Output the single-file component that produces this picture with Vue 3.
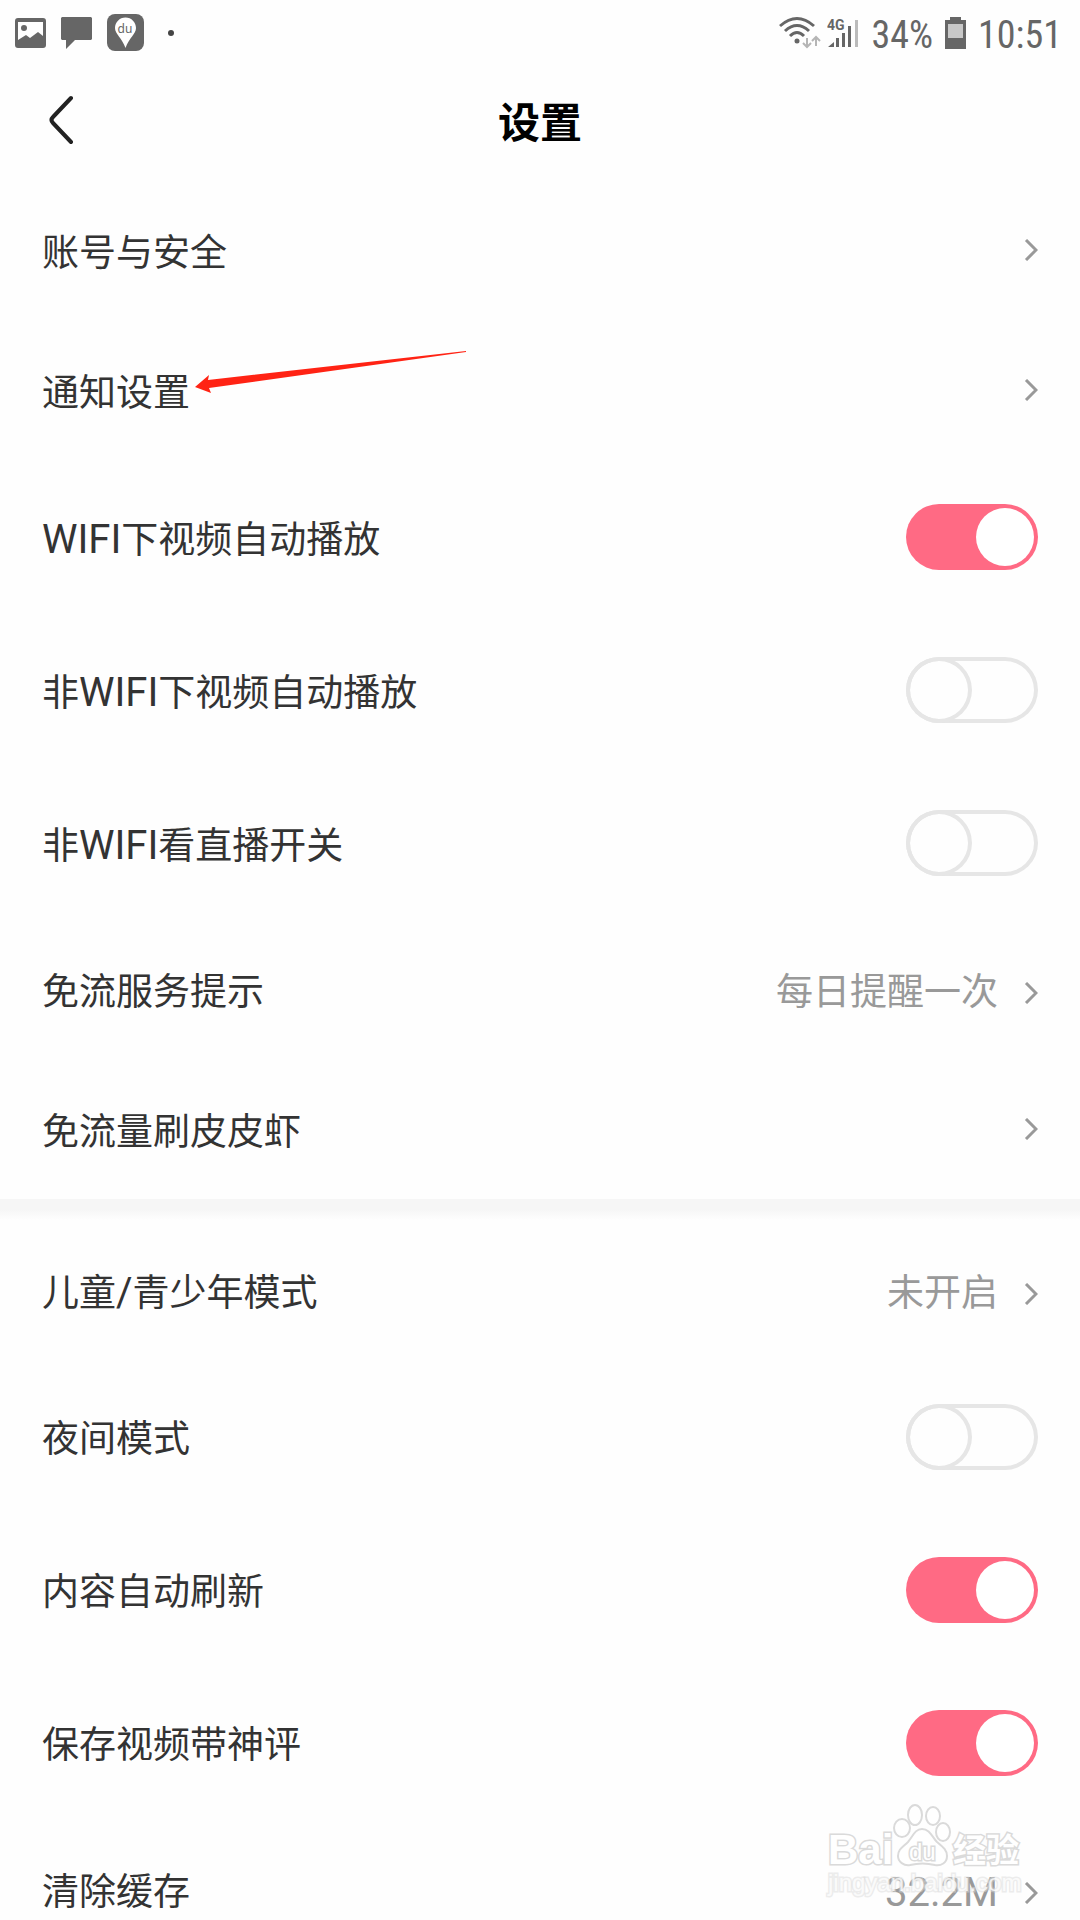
<script setup>
import { reactive } from 'vue'

const groups = reactive([
  [
    { id: 'account', label: '账号与安全' },
    { id: 'notify', label: '通知设置', marked: true },
    { id: 'wifiPlay', label: 'WIFI下视频自动播放', type: 'switch', on: true },
    { id: 'cellPlay', label: '非WIFI下视频自动播放', type: 'switch', on: false },
    { id: 'cellLive', label: '非WIFI看直播开关', type: 'switch', on: false },
    { id: 'freeTip', label: '免流服务提示', value: '每日提醒一次' },
    { id: 'freeFlow', label: '免流量刷皮皮虾' }
  ],
  [
    { id: 'teen', label: '儿童/青少年模式', value: '未开启' },
    { id: 'night', label: '夜间模式', type: 'switch', on: false },
    { id: 'refresh', label: '内容自动刷新', type: 'switch', on: true },
    { id: 'saveVideo', label: '保存视频带神评', type: 'switch', on: true },
    { id: 'cache', label: '清除缓存', value: '32.2M' }
  ]
])

// 拆開中英文,英文字級稍大
const split = (text) => text.match(/[\x20-\x7e]+|[^\x20-\x7e]+/g)
const isLatin = (part) => /^[\x20-\x7e]/.test(part)
</script>

<template>
  <div class="page">
    <div class="status">
      <div class="status-left">
        <svg width="31" height="30" viewBox="0 0 31 30">
          <path fill="#666" fill-rule="evenodd" d="M3 0h25a3 3 0 0 1 3 3v24a3 3 0 0 1-3 3H3a3 3 0 0 1-3-3V3a3 3 0 0 1 3-3zM3 4v18l8-5 4 3 8-6 5 4V4z" />
          <circle cx="9" cy="10" r="3" fill="#666" />
        </svg>
        <svg width="31" height="32" viewBox="0 0 31 32">
          <path fill="#666" d="M1 0h29l1 1v21l-1 1H14l-9 9v-9H1l-1-1V1z" />
        </svg>
        <svg width="37" height="37" viewBox="0 0 37 37">
          <rect width="37" height="37" rx="8" fill="#666" />
          <path fill="#fff" d="M18.500 3.500c-6 0-10.500 5-10.500 10.500 0 6 7 10 10.500 20 3.500-10 10.500-14 10.500-20 0-5.500-4.500-10.500-10.500-10.500z" />
          <text x="18" y="19" text-anchor="middle" class="du-icon">du</text>
        </svg>
        <i class="dot"></i>
      </div>
      <div class="status-right">
        <svg width="42" height="34" viewBox="0 0 42 34">
          <g fill="none" stroke="#666" stroke-width="3">
            <path d="M1 10Q18-5 35 10" />
            <path d="M6 15Q18 4 30 15" />
            <path d="M11 20Q18 13 25 20" />
          </g>
          <circle cx="18" cy="25" r="2.500" fill="#666" />
          <path fill="none" stroke="#b5b5b5" stroke-width="2" d="M28 22v9M24 27l4 4 4-4M37 30v-9M33 25l4-4 4 4" />
        </svg>
        <svg class="signal" width="33" height="30" viewBox="0 0 33 30">
          <text x="0" y="12" class="net">4G</text>
          <path fill="#666" d="M1 29l6-5v5zM9 20h3v9H9zM15 15h3v14h-3zM21 8h3v21h-3z" />
          <path fill="#bbb" d="M28 2h3v27h-3z" />
        </svg>
        <span class="status-text">34%</span>
        <svg class="battery" width="21" height="32" viewBox="0 0 21 32">
          <path fill="#666" d="M5 0h11v3h5v29H0V3h5z" />
          <path fill="#c8c8c8" d="M3 7h15v14H3z" />
        </svg>
        <span class="status-text">10:51</span>
      </div>
    </div>

    <header class="header">
      <button class="back" type="button" aria-label="返回">
        <svg width="26" height="50" viewBox="0 0 26 50">
          <path d="M23 3L5 22q-3 3 0 6l18 19" />
        </svg>
      </button>
      <h1>设置</h1>
    </header>

    <main>
      <section v-for="(group, index) in groups" :key="index" class="group">
        <template v-for="item in group" :key="item.id">
          <div v-if="item.type == 'switch'" class="row row-switch">
            <label :for="item.id" class="label">
              <span v-for="part in split(item.label)" :class="{ latin: isLatin(part) }">{{ part }}</span>
            </label>
            <input :id="item.id" v-model="item.on" type="checkbox" class="switch" >
          </div>
          <button v-else type="button" class="row">
            <span class="label">
              <span v-for="part in split(item.label)" :class="{ latin: isLatin(part) }">{{ part }}</span>
            </span>
            <span v-if="item.value" class="value" :class="{ latin: isLatin(item.value) }">{{ item.value }}</span>
            <svg class="chevron" width="14" height="22" viewBox="0 0 14 22">
              <path d="M2 1l10 10L2 21" />
            </svg>
            <svg v-if="item.marked" class="pointer" width="272" height="44" viewBox="0 0 272 44">
              <path fill="#ff2314" d="M0 37l14-12-1 5L271 1v1L14 38l2 5z" />
            </svg>
          </button>
        </template>
      </section>
    </main>

    <svg class="watermark" width="200" height="100" viewBox="0 0 200 100">
      <text x="4" y="64" class="wm-bai">Bai</text>
      <ellipse cx="78" cy="28" rx="8" ry="9" />
      <ellipse cx="91" cy="15" rx="7" ry="10" />
      <ellipse cx="109" cy="16" rx="7" ry="9" />
      <ellipse cx="119" cy="32" rx="7" ry="9" />
      <path d="M98 29c8 0 10 8 15 13 6 5 10 8 10 14 0 7-6 10-12 9-8-2-17-2-25 0-6 1-12-3-12-9 0-7 5-9 10-14 5-6 7-13 14-13z" />
      <text x="85" y="60" class="wm-du">du</text>
      <text x="129" y="62" class="wm-cn">经验</text>
      <text x="4" y="91" class="wm-url">jingyan.baidu.com</text>
    </svg>
  </div>
</template>

<style>
body {
  background: #fefefe;
}
</style>

<style scoped>
.page {
  position: relative;
  height: 100vh;
  overflow: hidden;
  display: flex;
  flex-direction: column;
  background: #fefefe;
  color: #333;
  font-family: Roboto, "Noto Sans CJK SC", sans-serif;
}
main {
  flex: 1;
  min-height: 0;
  overflow-y: auto;
  scrollbar-width: none;
}
.status {
  display: flex;
  flex: none;
  justify-content: space-between;
  box-sizing: border-box;
  height: 60px;
  padding: 5px 18px 0 15px;
  color: #666;
  font-family: "Roboto Condensed", "Liberation Sans Narrow", Roboto, sans-serif;
  font-size: 38px;
}
.status-left {
  display: flex;
  align-items: center;
  gap: 15px;
}
.status-right {
  display: flex;
  align-items: center;
}
.status-text {
  padding-top: 4px;
}
.dot {
  width: 6px;
  height: 6px;
  margin-left: 9px;
  border-radius: 50%;
  background: #444;
}
.du-icon {
  fill: #666;
  font: 12px "Noto Sans", sans-serif;
}
.net {
  fill: #666;
  font: bold 14px Roboto, sans-serif;
}
.signal {
  margin: 0 12px 0 6px;
}
.battery {
  margin: 0 12px;
}
.header {
  display: grid;
  flex: none;
  grid-template-columns: 1fr auto 1fr;
  align-items: center;
  height: 120px;
  padding: 0 48px;
}
.header h1 {
  margin: 0;
  padding-top: 7px;
  color: #000;
  font-size: 42px;
  line-height: 60px;
}
.back {
  justify-self: start;
  display: flex;
  padding: 0;
  border: 0;
  background: none;
}
.back path {
  fill: none;
  stroke: #222;
  stroke-width: 4;
  stroke-linecap: round;
}
.group + .group::before {
  content: "";
  display: block;
  height: 21px;
  background: linear-gradient(#f6f6f6 50%, #fefefe);
}
.row {
  position: relative;
  display: flex;
  align-items: center;
  box-sizing: border-box;
  width: 100%;
  height: 140px;
  padding: 0 42px;
  border: 0;
  background: none;
  color: #333;
  font-family: inherit;
  font-size: 37px;
  line-height: 54px;
  text-align: left;
}
.row-switch {
  height: 153px;
}
.label {
  flex: 1;
}
.label,
.value {
  padding-top: 7px;
}
.latin {
  font-size: 40px;
}
.value {
  color: #999;
}
.chevron {
  margin-left: 26px;
}
.value + .chevron {
  margin-top: 7px;
}
.chevron path {
  fill: none;
  stroke: #999;
  stroke-width: 3;
}
.pointer {
  position: absolute;
  left: 195px;
  top: 30px;
}
.switch {
  appearance: none;
  display: flex;
  box-sizing: border-box;
  width: 132px;
  height: 66px;
  margin: 0;
  border-radius: 33px;
  box-shadow: inset 0 0 0 4px #e6e6e6;
}
.switch::before {
  content: "";
  width: 66px;
  height: 66px;
  border-radius: 50%;
  box-shadow: inset 0 0 0 4px #e6e6e6;
}
.switch:checked {
  justify-content: flex-end;
  background: #ff6a84;
  box-shadow: none;
}
.switch:checked::before {
  width: 58px;
  height: 58px;
  margin: 4px;
  background: #fff;
  box-shadow: none;
}
.watermark {
  position: absolute;
  right: 56px;
  bottom: 20px;
  fill: #fff;
  stroke: #dadada;
  stroke-width: 2;
  pointer-events: none;
}
.watermark text {
  stroke-width: 3;
  paint-order: stroke;
  font-family: "Liberation Sans", "Noto Sans CJK SC", sans-serif;
}
.wm-bai {
  font-size: 42px;
  font-weight: bold;
}
.wm-du {
  font-size: 24px;
}
.wm-cn {
  font-size: 33px;
  font-weight: bold;
}
.wm-url {
  font-size: 24px;
  fill-opacity: 0.8;
  stroke-opacity: 0.5;
}
</style>
